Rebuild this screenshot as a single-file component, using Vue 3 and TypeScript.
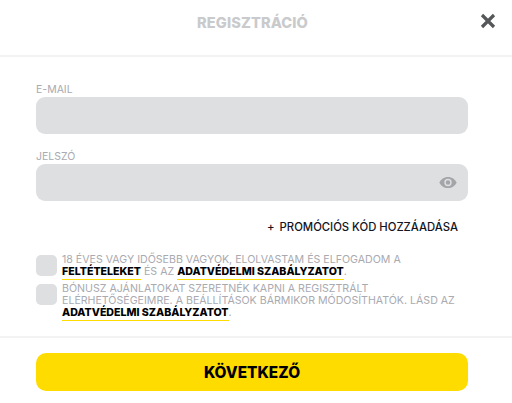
<template>
  <div class="modal">
    <header class="modal-head">
      <h1 class="modal-title">REGISZTRÁCIÓ</h1>
      <button class="close" type="button" aria-label="Bezárás">
        <svg width="16" height="16" viewBox="0 0 16 16">
          <path d="M2 2L14 14M14 2L2 14" stroke="#555759" stroke-width="3.2" fill="none" />
        </svg>
      </button>
    </header>

    <form class="modal-body" @submit.prevent>
      <label class="field">
        <span class="field-label">E-MAIL</span>
        <span class="field-box"></span>
      </label>
      <label class="field field-second">
        <span class="field-label">JELSZÓ</span>
        <span class="field-box field-box-eye">
          <svg width="18" height="13" viewBox="0 0 20 14">
            <path
              fill-rule="evenodd"
              fill="#a3a5a8"
              d="M10 .8C5.6.8 2 3.4.4 7c1.6 3.6 5.2 6.2 9.6 6.2s8-2.6 9.600-6.200C18 3.400 14.400.8 10 .8zm0 10.300A4.100 4.100 0 1 1 10 2.900a4.100 4.100 0 0 1 0 8.200zm0-6.600a2.500 2.500 0 1 0 0 5 2.500 2.500 0 0 0 0-5z"
            />
          </svg>
        </span>
      </label>

      <div class="promo"><span class="promo-plus">+</span>PROMÓCIÓS KÓD HOZZÁADÁSA</div>

      <div class="check-row">
        <span class="check"></span>
        <p class="check-text">
          18 ÉVES VAGY IDŐSEBB VAGYOK, ELOLVASTAM ÉS ELFOGADOM A<br />
          <a class="link">FELTÉTELEKET</a> ÉS AZ <a class="link">ADATVÉDELMI SZABÁLYZATOT</a>.
        </p>
      </div>
      <div class="check-row check-row-second">
        <span class="check"></span>
        <p class="check-text">
          BÓNUSZ AJÁNLATOKAT SZERETNÉK KAPNI A REGISZTRÁLT<br />
          ELÉRHETŐSÉGEIMRE. A BEÁLLÍTÁSOK BÁRMIKOR MÓDOSÍTHATÓK. LÁSD AZ<br />
          <a class="link">ADATVÉDELMI SZABÁLYZATOT</a>.
        </p>
      </div>
    </form>

    <footer class="modal-foot">
      <button class="next" type="button">KÖVETKEZŐ</button>
    </footer>
  </div>
</template>

<script setup lang="ts"></script>

<style>
html,
body {
  margin: 0;
  background: #fff;
}
</style>

<style scoped>
.modal {
  width: 512px;
  height: 403px;
  overflow: hidden;
  background: #fff;
  font-family: Inter, "Noto Sans", sans-serif;
  display: flex;
  flex-direction: column;
}

.modal-head {
  position: relative;
  height: 55px;
  flex: none;
  border-bottom: 2px solid #f3f3f4;
  display: flex;
  align-items: center;
  justify-content: center;
}

.modal-title {
  margin: 0 7px 9px 0;
  font-size: 14.6px;
  font-weight: 800;
  color: #c9cacc;
  letter-spacing: 0.1px;
}

.close {
  position: absolute;
  right: 16px;
  top: 13px;
  width: 16px;
  height: 16px;
  padding: 0;
  border: 0;
  background: none;
  line-height: 0;
}

.modal-body {
  flex: 1;
  padding: 25px 44px 0 36px;
}

.field {
  display: block;
}

.field-second {
  margin-top: 15px;
}

.field-label {
  display: block;
  height: 15px;
  font-size: 10.5px;
  line-height: 15px;
  color: #a9aab0;
}

.field-box {
  display: flex;
  align-items: center;
  justify-content: flex-end;
  height: 37px;
  border-radius: 9px;
  background: #dedfe1;
}

.field-box-eye {
  padding-right: 11px;
}

.promo {
  margin-top: 19px;
  text-align: right;
  padding-right: 10px;
  font-size: 11.3px;
  line-height: 14px;
  font-weight: 500;
  color: #14141e;
}

.promo-plus {
  margin-right: 5px;
}

.check-row {
  display: flex;
  gap: 5px;
  margin-top: 20px;
}

.check-row-second {
  margin-top: 5px;
}

.check {
  width: 21px;
  height: 21px;
  flex: none;
  margin-top: 1px;
  border-radius: 5px;
  background: #dedfe1;
}

.check-text {
  margin: 0;
  font-size: 10.62px;
  line-height: 12px;
  color: #a9aab0;
  white-space: nowrap;
}

.link {
  font-weight: 800;
  color: #000;
  padding-bottom: 1px;
  border-bottom: 1px solid #ffdc00;
}

.modal-foot {
  flex: none;
  height: 67px;
  box-sizing: border-box;
  border-top: 2px solid #f3f3f4;
  padding: 15px 44px 0 36px;
}

.next {
  display: block;
  width: 100%;
  height: 38px;
  border: 0;
  border-radius: 10px;
  background: #ffdc00;
  font-family: inherit;
  font-size: 15.4px;
  font-weight: 800;
  color: #000;
}
</style>
